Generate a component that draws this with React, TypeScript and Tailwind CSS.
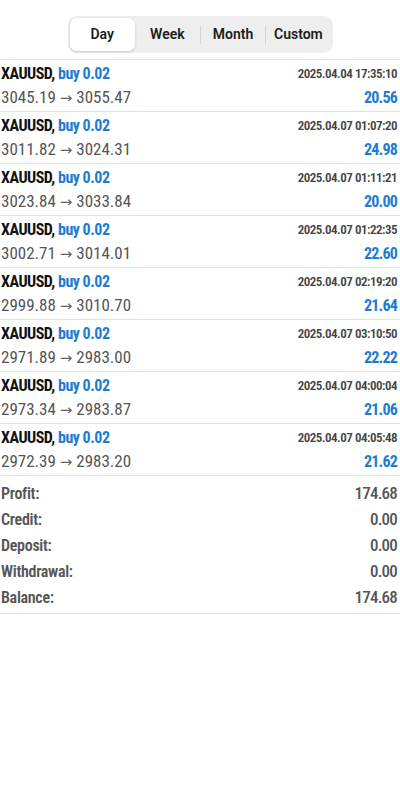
const TRADES = [
  { open: '3045.19', close: '3055.47', time: '2025.04.04 17:35:10', profit: '20.56' },
  { open: '3011.82', close: '3024.31', time: '2025.04.07 01:07:20', profit: '24.98' },
  { open: '3023.84', close: '3033.84', time: '2025.04.07 01:11:21', profit: '20.00' },
  { open: '3002.71', close: '3014.01', time: '2025.04.07 01:22:35', profit: '22.60' },
  { open: '2999.88', close: '3010.70', time: '2025.04.07 02:19:20', profit: '21.64' },
  { open: '2971.89', close: '2983.00', time: '2025.04.07 03:10:50', profit: '22.22' },
  { open: '2973.34', close: '2983.87', time: '2025.04.07 04:00:04', profit: '21.06' },
  { open: '2972.39', close: '2983.20', time: '2025.04.07 04:05:48', profit: '21.62' },
]

const SUMMARY = [
  ['Profit:', '174.68'],
  ['Credit:', '0.00'],
  ['Deposit:', '0.00'],
  ['Withdrawal:', '0.00'],
  ['Balance:', '174.68'],
]

const TABS = ['Day', 'Week', 'Month', 'Custom']

export default function App() {
  return (
    <div className="w-[400px] h-[800px] bg-white text-[#333] font-['Roboto_Condensed',Roboto,sans-serif]">
      {/* period switcher */}
      <div className="flex justify-center pt-[16px] pb-[6px] border-b border-[#e2e2e2]">
        <div className="flex items-center h-[37px] w-[265px] rounded-[9px] bg-[#eeeeee] p-[2px]">
          {TABS.map((t, i) => (
            <div key={t} className="flex-1 flex items-center h-full">
              {i > 1 && <div className="w-px h-[18px] bg-[#d4d4d4]" />}
              <div
                className={`flex-1 h-full flex items-center justify-center text-[14px] font-semibold text-[#1c1c1c] font-['Roboto',sans-serif] ${
                  i === 0 ? 'bg-white rounded-[7px] shadow-[0_1px_3px_rgba(0,0,0,0.15)]' : ''
                }`}
              >
                {t}
              </div>
            </div>
          ))}
        </div>
      </div>

      {/* deals */}
      {TRADES.map((t) => (
        <div key={t.time} className="h-[52px] border-b border-[#e2e2e2] pl-[1px] pr-[3px] pt-[2px] flex flex-col">
          <div className="flex items-center justify-between h-[24px]">
            <span className="text-[16px] font-bold text-[#111] tracking-[-0.5px]">
              XAUUSD, <span className="text-[#1d7bd1]">buy 0.02</span>
            </span>
            <span className="text-[13px] font-semibold text-[#444] tracking-[-0.5px]">{t.time}</span>
          </div>
          <div className="flex items-center justify-between h-[24px]">
            <span className="text-[17px] text-[#555]">
              {t.open}{' '}
              <span className="font-['DejaVu_Sans',sans-serif] text-[15px] text-[#666]">→</span>{' '}
              {t.close}
            </span>
            <span className="text-[16px] font-bold text-[#1d7bd1] tracking-[-0.8px]">{t.profit}</span>
          </div>
        </div>
      ))}

      {/* totals */}
      <div className="pt-[5px] pb-[2px] border-b border-[#e2e2e2] pl-[1px] pr-[3px]">
        {SUMMARY.map(([k, v]) => (
          <div key={k} className="flex items-center justify-between h-[26px] text-[16px] text-[#555]">
            <span className="font-semibold tracking-[-0.3px]">{k}</span>
            <span className="font-medium text-[17px] tracking-[-0.8px]">{v}</span>
          </div>
        ))}
      </div>
    </div>
  )
}
